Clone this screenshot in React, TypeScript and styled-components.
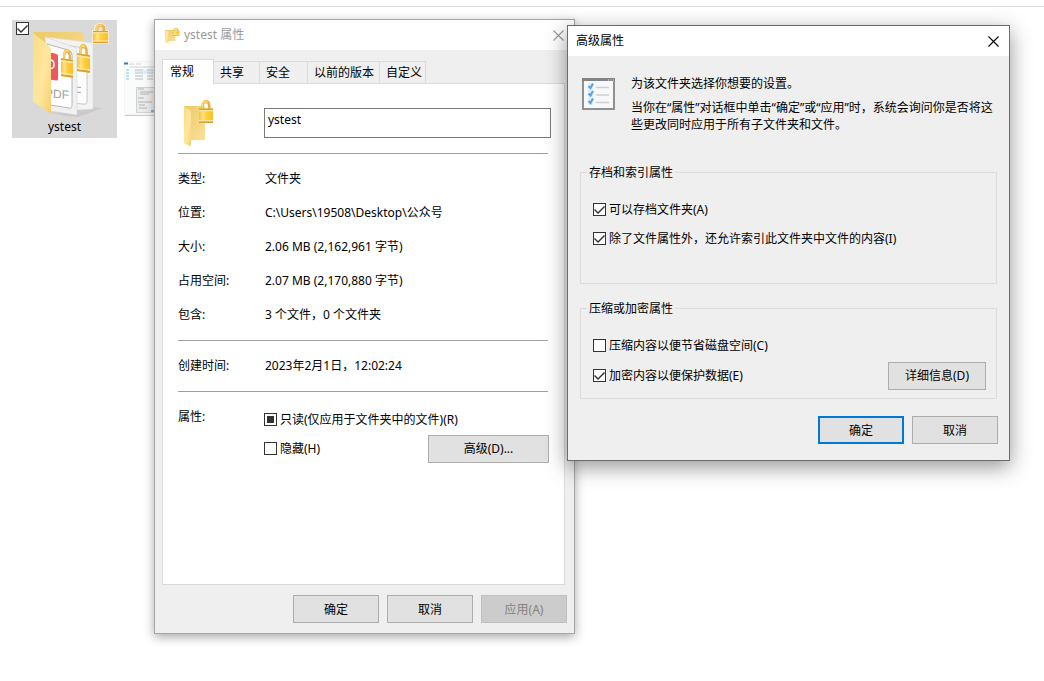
import React, { useEffect, useRef } from "react";
import styled, { createGlobalStyle, css } from "styled-components";

const GlobalStyle = createGlobalStyle`
  *, *::before, *::after { box-sizing: border-box; }
  body {
    margin: 0;
    background: #fff;
    color: #000;
    font: 12px/17px "Noto Sans", "Noto Sans CJK SC", sans-serif;
  }
  button, input { font: inherit; color: inherit; }
  p, dl, dd, h2 { margin: 0; }
`;

const Desktop = styled.main`
  position: relative;
  min-height: 100vh;
  overflow: hidden;
`;

const TopRule = styled.div`
  height: 7px;
  border-bottom: 1px solid #dcdcdc;
`;

const FileGrid = styled.div`
  display: flex;
  align-items: flex-start;
  gap: 7px;
  padding: 13px 12px;
`;

const FileTile = styled.label`
  position: relative;
  display: flex;
  flex-direction: column;
  align-items: center;
  width: 105px;
  height: 118px;
  background: #d9d9d9;

  svg { display: block; }
  input { position: absolute; top: 2px; left: 4px; }
`;

const Thumbnail = styled.div`
  padding-top: 41px;
`;

const CheckInput = styled.input.attrs({ type: "checkbox" })`
  appearance: none;
  flex: none;
  width: 13px;
  height: 13px;
  margin: 0;
  border: 1px solid #333;
  background: #fff;

  &::before {
    content: "";
    display: none;
    width: 11px;
    height: 11px;
    background: #333;
  }
  &:checked::before {
    display: block;
    clip-path: polygon(1px 5px, 4px 8px, 10px 2px, 11px 3px, 4px 10px, 0 6px);
  }
  &:indeterminate::before {
    display: block;
    clip-path: inset(2px);
  }
`;

const Window = styled.section<{ $left: number; $top: number; $width: number; $active?: boolean }>`
  position: absolute;
  left: ${(p) => p.$left}px;
  top: ${(p) => p.$top}px;
  width: ${(p) => p.$width}px;
  border: 1px solid ${(p) => (p.$active ? "#6b6b6b" : "#a6a6a6")};
  background: #efefef;
  box-shadow: ${(p) =>
    p.$active ? "0 6px 20px rgba(0, 0, 0, 0.42)" : "0 3px 10px rgba(0, 0, 0, 0.34)"};
`;

const TitleBar = styled.header<{ $active?: boolean }>`
  display: flex;
  align-items: center;
  gap: 4px;
  height: 30px;
  padding-left: ${(p) => (p.$active ? 8 : 10)}px;
  background: #fff;
  color: ${(p) => (p.$active ? "#000" : "#999")};
`;

const Title = styled.h2`
  flex: 1;
  padding-bottom: 2px;
  font-size: 12px;
  font-weight: 400;
`;

const CloseButton = styled.button`
  display: grid;
  place-items: center;
  width: 31px;
  height: 28px;
  padding: 0;
  border: 0;
  background: none;
`;

const WindowBody = styled.div`
  padding: 9px 7px 10px;
`;

const TabList = styled.div`
  display: flex;
  align-items: flex-end;
  height: 24px;
`;

const Tab = styled.button<{ $width: number }>`
  width: ${(p) => p.$width}px;
  height: 22px;
  padding: 0 0 0 6px;
  border: 1px solid #dadada;
  border-width: 1px 1px 0 0;
  background: #efefef;
  text-align: left;
  white-space: nowrap;

  &[aria-selected="true"] {
    position: relative;
    height: 25px;
    margin-bottom: -1px;
    padding: 0 0 2px 7px;
    border-left-width: 1px;
    background: #fff;
  }
`;

const TabPanel = styled.div`
  min-height: 502px;
  margin-right: 2px;
  padding: 0 13px 0 15px;
  border: 1px solid #dadada;
  background: #fff;
`;

const fieldColumns = css`
  display: grid;
  grid-template-columns: 86px 1fr;
`;

const NameRow = styled.div`
  ${fieldColumns}
  height: 69px;
  padding-top: 16px;

  svg { margin-left: 6px; }
`;

const NameInput = styled.input`
  width: 100%;
  height: 30px;
  margin-top: 8px;
  padding: 0 3px 7px;
  border: 1px solid #7a7a7a;
  background: #fff;
`;

const Rule = styled.hr`
  height: 1px;
  margin: 0 3px 0 0;
  border: 0;
  background: #a0a0a0;
`;

const Facts = styled.dl`
  padding: 8px 0;
`;

const Fact = styled.div`
  ${fieldColumns}
  line-height: 34px;

  dd { padding-left: 1px; }
`;

const Attributes = styled.div`
  ${fieldColumns}
  padding-top: 8px;
`;

const AttributesLabel = styled.span`
  line-height: 34px;
`;

const AttributeList = styled.div`
  padding: 5px 2px 0 0;
`;

const OptionRow = styled.div`
  display: flex;
  align-items: center;
  justify-content: space-between;
  height: 29px;
`;

const CheckLabel = styled.label`
  display: flex;
  align-items: center;
  gap: 3px;
`;

const PushButton = styled.button<{ $width?: number }>`
  width: ${(p) => p.$width ?? 86}px;
  height: 28px;
  padding: 0;
  border: 1px solid #adadad;
  background: #e1e1e1;

  &[data-default="true"] { border: 2px solid #0078d7; }
  &:disabled {
    border-color: #bfbfbf;
    background: #ccc;
    color: #838383;
  }
`;

const ButtonBar = styled.footer<{ $space: number }>`
  display: flex;
  justify-content: flex-end;
  gap: 8px;
  padding-top: ${(p) => p.$space}px;
`;

const DialogBody = styled.div`
  padding: 19px 11px 16px 12px;
`;

const Intro = styled.div`
  display: flex;
  gap: 16px;
  padding: 0 0 15px 2px;

  svg { flex: none; margin-top: 3px; }
`;

const IntroText = styled.div`
  display: flex;
  flex: 1;
  flex-direction: column;
  gap: 7px;
`;

const Group = styled.fieldset<{ $bottom: number }>`
  margin: 16px 1px 0 0;
  padding: 0 6px ${(p) => p.$bottom}px;
  border: 1px solid #dcdcdc;

  legend { padding: 0 2px; }
`;

const GroupRows = styled.div<{ $gap: number }>`
  display: flex;
  flex-direction: column;
  gap: ${(p) => p.$gap}px;
  padding: 14px 4px 0 6px;
`;

function Check({ label, checked, mixed }: { label: string; checked?: boolean; mixed?: boolean }) {
  const ref = useRef<HTMLInputElement>(null);
  useEffect(() => {
    if (ref.current) ref.current.indeterminate = !!mixed;
  }, [mixed]);
  return (
    <CheckLabel>
      <CheckInput ref={ref} defaultChecked={checked} />
      {label}
    </CheckLabel>
  );
}

function Close() {
  return (
    <CloseButton aria-label="关闭">
      <svg width="11" height="11" viewBox="0 0 11 11" stroke="currentColor" strokeWidth="1.1">
        <path d="M.5 .5l10 10M10.5 .5l-10 10" />
      </svg>
    </CloseButton>
  );
}

const HiddenDefs = styled.svg`
  position: absolute;
`;

function Gradients() {
  return (
    <HiddenDefs width="0" height="0" aria-hidden="true">
      <defs>
        <linearGradient id="flap" x1="0" y1="0" x2="1" y2="1">
          <stop offset="0" stopColor="#fbdc83" />
          <stop offset="0.55" stopColor="#ffe7a0" />
          <stop offset="1" stopColor="#f6cf6c" />
        </linearGradient>
        <linearGradient id="back" x1="0" y1="0" x2="1" y2="1">
          <stop offset="0" stopColor="#ecc965" />
          <stop offset="1" stopColor="#fae09a" />
        </linearGradient>
        <linearGradient id="brass">
          <stop offset="0" stopColor="#f4c43c" />
          <stop offset="0.3" stopColor="#fde188" />
          <stop offset="0.55" stopColor="#ffce34" />
          <stop offset="1" stopColor="#f7c02f" />
        </linearGradient>
      </defs>
    </HiddenDefs>
  );
}

function Padlock({ x, y, w, h, skew = 0 }: { x: number; y: number; w: number; h: number; skew?: number }) {
  return (
    <g transform={`translate(${x} ${y}) skewY(${skew}) scale(${w / 15} ${h / 19})`}>
      <path d="M4 9V4.600a3.400 3.200 0 0 1 7 0V9" fill="none" stroke="#e8b245" strokeWidth="2.8" />
      <path d="M3.800 9V4.600a3.400 3.200 0 0 1 5.400-2.800" fill="none" stroke="#fbd777" strokeWidth="1.5" />
      <path d="M0 7h15v12H0z" fill="url(#brass)" />
      <path d="M0 7h15v1.200H0zM0 17.600h15V19H0z" fill="#dda032" />
      <path d="M0 8.200h15v1H0zM0 16.600h15v1H0z" fill="#ffe9a6" />
    </g>
  );
}

function LargeFolder() {
  return (
    <svg width="105" height="98" viewBox="12 20 105 98" aria-hidden="true">
      <path d="M50 113l26-3 8-4 18 2-10 4-14 5-12-1z" fill="#bcbcbc" opacity=".5" />
      <path d="M33 33q1-1 3-1h44q3 0 3 3v70H46z" fill="url(#back)" />
      <path d="M45 37l48 6v66l-17 1z" fill="#f3f3f3" stroke="#dedede" strokeWidth=".6" />
      <path d="M57 44l27 4q3 1 3 4v49q0 4-4 3l-12-1z" fill="#fff" stroke="#b2b2b2" strokeWidth=".7" />
      <path d="M75 87l6 .5M75 92l6 .5" stroke="#a5a5a5" />
      <path d="M45 37l32 11v67l-27-4z" fill="#f1f1f1" stroke="#d3d3d3" strokeWidth=".6" />
      <path d="M47 44l21 6q4 1 4 5v50q0 4-3 3l-19-3z" fill="#fff" stroke="#a6a6a6" strokeWidth=".8" />
      <path d="M46 52l9 1.500q3 .5 3 3V79q0 2-2 1.500L46 79z" fill="#eb5a5e" />
      <path d="M50 60q4 0 4 4.500t-4 4" fill="none" stroke="#fff" strokeWidth="1.600" />
      <text transform="translate(45 97) skewY(5)" fontSize="12" fill="#9c9c9c" fontFamily="Liberation Sans, sans-serif">PDF</text>
      <Padlock x={77} y={43} w={13} h={28} skew={8} />
      <Padlock x={61} y={48} w={12} h={28} skew={8} />
      <path d="M33 33l16 13q2 2 2 4v64L34 102q-1-1-1-2z" fill="url(#flap)" />
      <path d="M92 34v-4h2v-3q1-4 6-4t6 4v3h3v14H92z" fill="#f4ead2" />
      <Padlock x={93} y={24} w={15} h={19} />
    </svg>
  );
}

function DocumentThumbnail() {
  const lines = [72, 75, 78, 81];
  return (
    <svg width="60" height="56" viewBox="124 61 60 56" aria-hidden="true">
      <path d="M125 115.500h59" stroke="#c5c5c5" />
      <path d="M124 61h60v54h-60z" fill="#fafbfb" stroke="#dfe2e5" strokeWidth=".6" />
      <path d="M124 62.500h4v2h-4z" fill="#3079c5" />
      <path d="M129 64h5M136 64h5M130 67h24" stroke="#c4c9cf" strokeWidth=".8" />
      {lines.map((y) => (
        <g key={y} strokeWidth=".9">
          <path d={`M126 ${y - 2}h3`} stroke="#7db8e4" />
          <path d={`M135 ${y - 2}h8M147 ${y - 2}h6`} stroke="#aeb3b8" />
        </g>
      ))}
      <path d="M134 70.500h50v3h-50z" fill="#cfe3f5" opacity=".6" />
      <path d="M136.500 87.500h48v25h-48z" fill="#ececec" stroke="#c8c8c8" strokeWidth=".8" />
      <path d="M138 89h6M140 92h13M140 94h9M138 98h6M138 102h14M139 105h6M139 108h8" stroke="#a6a6a6" strokeWidth=".8" />
      <path d="M151 110h5v2h-5z" fill="#7eb5e4" />
    </svg>
  );
}

function LockedFolder({ width, height }: { width: number; height: number }) {
  return (
    <svg width={width} height={height} viewBox="0 0 30 46" preserveAspectRatio="none" aria-hidden="true">
      <path d="M0 7q0-1 1-1h18q2 0 2 2v32H6L0 36z" fill="url(#back)" />
      <path d="M0 7l6 3q1 1 1 3v32q0 1-1 1L1 44q-1-1-1-2z" fill="url(#flap)" />
      <Padlock x={15} y={0} w={14} h={23} />
    </svg>
  );
}

function OptionsIcon() {
  return (
    <svg width="33" height="32" viewBox="0 0 33 32" aria-hidden="true">
      <path d="M1 1h31v30H1z" fill="#f8f8f8" stroke="#8d9194" strokeWidth="2" />
      <path d="M0 0h33v3H0z" fill="#808487" />
      <path d="M26 2h1M28.500 2h1M31 2h1" stroke="#dfe2e4" />
      <path d="M6 5h5v22H6z" fill="#e3edf6" />
      {[8, 15.5, 23].map((y) => (
        <g key={y}>
          <path d={`M6.500 ${y}l2 2 2.500-4.500`} fill="none" stroke="#5ba6e2" strokeWidth="2.200" />
          <path d={`M14 ${y + 1.5}h13`} stroke="#cfcfcf" strokeWidth="1.500" />
        </g>
      ))}
    </svg>
  );
}

const tabs = [
  { name: "常规", width: 52 },
  { name: "共享", width: 46 },
  { name: "安全", width: 48 },
  { name: "以前的版本", width: 72 },
  { name: "自定义", width: 46 },
];

const facts = [
  ["类型:", "文件夹"],
  ["位置:", "C:\\Users\\19508\\Desktop\\公众号"],
  ["大小:", "2.06 MB (2,162,961 字节)"],
  ["占用空间:", "2.07 MB (2,170,880 字节)"],
  ["包含:", "3 个文件，0 个文件夹"],
];

function PropertiesWindow() {
  return (
    <Window $left={154} $top={19} $width={421}>
      <TitleBar>
        <LockedFolder width={15} height={15} />
        <Title>ystest 属性</Title>
        <Close />
      </TitleBar>
      <WindowBody>
        <TabList role="tablist">
          {tabs.map((tab, i) => (
            <Tab key={tab.name} role="tab" aria-selected={i === 0} $width={tab.width}>
              {tab.name}
            </Tab>
          ))}
        </TabList>
        <TabPanel role="tabpanel">
          <NameRow>
            <LockedFolder width={30} height={46} />
            <NameInput type="text" aria-label="名称" defaultValue="ystest" />
          </NameRow>
          <Rule />
          <Facts>
            {facts.map(([term, value]) => (
              <Fact key={term}>
                <dt>{term}</dt>
                <dd>{value}</dd>
              </Fact>
            ))}
          </Facts>
          <Rule />
          <Facts>
            <Fact>
              <dt>创建时间:</dt>
              <dd>2023年2月1日，12:02:24</dd>
            </Fact>
          </Facts>
          <Rule />
          <Attributes>
            <AttributesLabel>属性:</AttributesLabel>
            <AttributeList>
              <OptionRow>
                <Check label="只读(仅应用于文件夹中的文件)(R)" mixed />
              </OptionRow>
              <OptionRow>
                <Check label="隐藏(H)" />
                <PushButton $width={121}>高级(D)...</PushButton>
              </OptionRow>
            </AttributeList>
          </Attributes>
        </TabPanel>
        <ButtonBar $space={10}>
          <PushButton>确定</PushButton>
          <PushButton>取消</PushButton>
          <PushButton disabled>应用(A)</PushButton>
        </ButtonBar>
      </WindowBody>
    </Window>
  );
}

function AdvancedWindow() {
  return (
    <Window $left={567} $top={25} $width={443} $active>
      <TitleBar $active>
        <Title>高级属性</Title>
        <Close />
      </TitleBar>
      <DialogBody>
        <Intro>
          <OptionsIcon />
          <IntroText>
            <p>为该文件夹选择你想要的设置。</p>
            <p>当你在“属性”对话框中单击“确定”或“应用”时，系统会询问你是否将这些更改同时应用于所有子文件夹和文件。</p>
          </IntroText>
        </Intro>
        <Group $bottom={30}>
          <legend>存档和索引属性</legend>
          <GroupRows $gap={0}>
            <OptionRow>
              <Check label="可以存档文件夹(A)" checked />
            </OptionRow>
            <OptionRow>
              <Check label="除了文件属性外，还允许索引此文件夹中文件的内容(I)" checked />
            </OptionRow>
          </GroupRows>
        </Group>
        <Group $bottom={8}>
          <legend>压缩或加密属性</legend>
          <GroupRows $gap={1}>
            <OptionRow>
              <Check label="压缩内容以便节省磁盘空间(C)" />
            </OptionRow>
            <OptionRow>
              <Check label="加密内容以便保护数据(E)" checked />
              <PushButton $width={98}>详细信息(D)</PushButton>
            </OptionRow>
          </GroupRows>
        </Group>
        <ButtonBar $space={17}>
          <PushButton data-default="true">确定</PushButton>
          <PushButton>取消</PushButton>
        </ButtonBar>
      </DialogBody>
    </Window>
  );
}

export default function App() {
  return (
    <Desktop>
      <GlobalStyle />
      <Gradients />
      <TopRule />
      <FileGrid>
        <FileTile>
          <LargeFolder />
          <CheckInput defaultChecked />
          ystest
        </FileTile>
        <Thumbnail>
          <DocumentThumbnail />
        </Thumbnail>
      </FileGrid>
      <PropertiesWindow />
      <AdvancedWindow />
    </Desktop>
  );
}
